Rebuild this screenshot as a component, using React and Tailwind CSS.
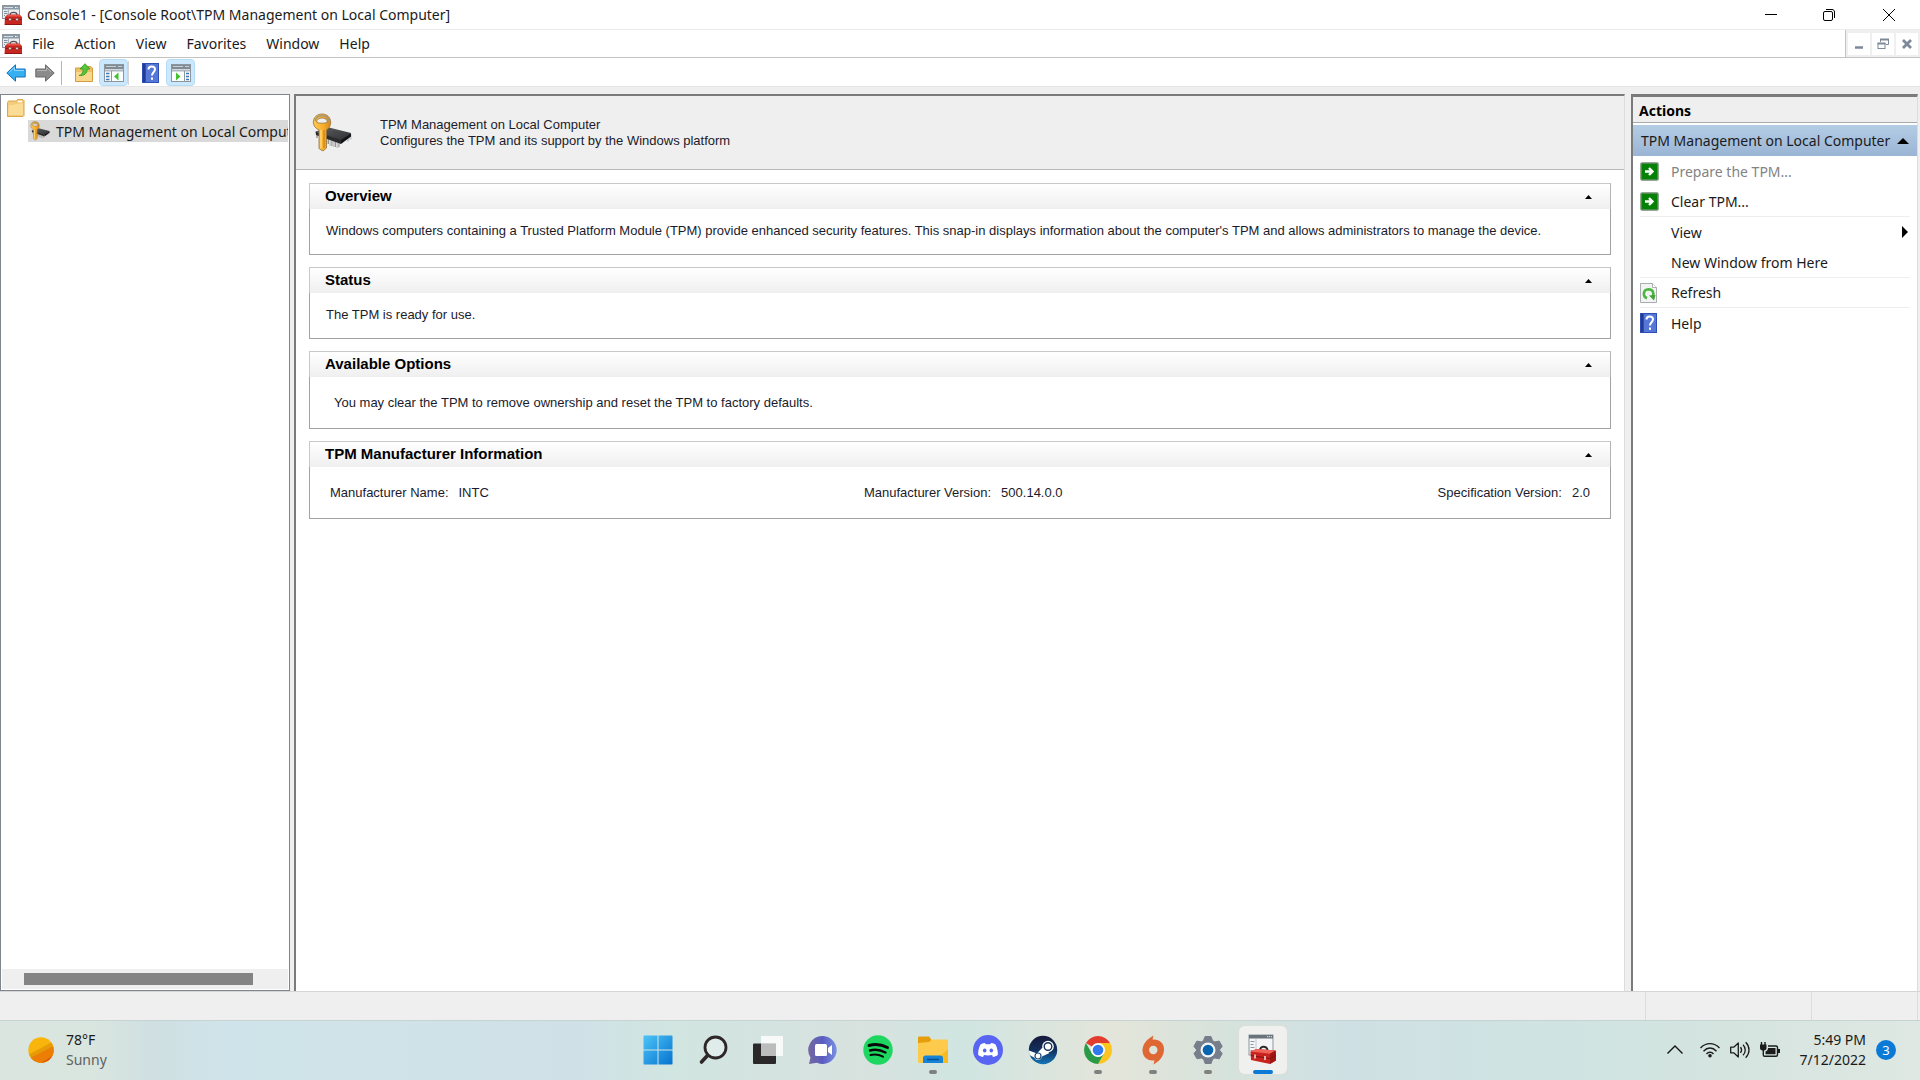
import { useState } from "react";
import clsx from "clsx";

function ConsoleIcon({ className }) {
  return (
    <svg viewBox="0 0 20 20" className={className} aria-hidden="true">
      <rect x="0.5" y="0.5" width="17" height="13" fill="#e9edf0" stroke="#8d969f" />
      <rect x="1" y="1" width="16" height="3.5" fill="#8b99a6" />
      <path d="M2 2.5h9" stroke="#d5dde3" />
      <path d="M13 2.5h3" stroke="#fff" strokeDasharray="1 .6" />
      <path d="M2 6.5h3.500M2 8.5h3.500M2 10.5h1" stroke="#7f8c99" />
      <path d="M6.500 4.500v5" stroke="#aab3bb" />
      <path d="M8 10c0-3.500 7-3.500 7 0" fill="none" stroke="#564d50" strokeWidth="1.300" />
      <path d="M3 12l2.500-2.500h12L20 12v8H2.500z" fill="#c9261f" />
      <path d="M4 11.500l2-1.500h11.500l2 1.500z" fill="#e9544a" />
      <path d="M3 14.500h17" stroke="#8c1713" strokeWidth=".8" />
      <path d="M3 19.500h17" stroke="#8d1713" />
      <circle cx="8" cy="14.500" r="1.400" fill="#e6dcda" stroke="#63211f" strokeWidth=".6" />
      <circle cx="15" cy="14.500" r="1.400" fill="#e6dcda" stroke="#63211f" strokeWidth=".6" />
    </svg>
  );
}

function ToolboxIcon({ className }) {
  return (
    <svg viewBox="0 0 30 32" className={className} aria-hidden="true">
      <rect x="1" y="1" width="24" height="20" fill="#f3f5f7" stroke="#8e979e" />
      <rect x="1" y="1" width="24" height="3.500" fill="#68737c" />
      <path d="M19 2.700h5" stroke="#e3e7ea" strokeDasharray="1.200 .7" />
      <path d="M8 5v16" stroke="#c1c8ce" />
      <path d="M2.500 7.500h4M2.500 10.500h3M2.500 13.500h4M2.500 16.500h2" stroke="#8b9aa8" />
      <path d="M12 17c-1-5 7-6 7.500-1" fill="none" stroke="#2e2a2a" strokeWidth="2" />
      <path d="M2.500 17.500l6-2.500 19 1.500.5 3v7l-6 3.500L3 26z" fill="#c9221f" />
      <path d="M2.500 17.500l6-2.500 19 1.500-5.500 3.300z" fill="#ef6458" />
      <path d="M22 19.800l5.700-3.300v10L22 30z" fill="#9f1512" />
      <path d="M3 21.500l19 3 6-3" fill="none" stroke="#84110f" />
      <path d="M7 20.500v4M17 22v4" stroke="#e8d6d2" strokeWidth="1.600" />
    </svg>
  );
}

function TpmIcon({ className }) {
  return (
    <svg viewBox="0 0 40 40" className={className} aria-hidden="true">
      <defs>
        <linearGradient id="key" x1="0" x2="1">
          <stop offset="0" stopColor="#ffc84e" />
          <stop offset="0.6" stopColor="#f8ad2c" />
          <stop offset="1" stopColor="#d5861a" />
        </linearGradient>
        <linearGradient id="chip" x1="0" x2="1" y2="1">
          <stop offset="0" stopColor="#606265" />
          <stop offset="1" stopColor="#2b2d2f" />
        </linearGradient>
      </defs>
      <path d="M15 25v6M18.500 26v7M22 27v7M25.500 28v7M36 23.500v5M38.500 21.500v5" stroke="#c9c9c9" strokeWidth="2.200" />
      <path d="M16.500 26v5M20 27v6M23.500 28v6M27 29v5" stroke="#7c7c7c" strokeWidth=".8" />
      <path d="M5 21v4" stroke="#999" strokeWidth="1.500" />
      <path d="M3.500 18.500L17 14.500l22 5.500-10 8z" fill="url(#chip)" />
      <path d="M3.500 18.500L29 27v4L4 22z" fill="#2a2b2d" />
      <path d="M29 27l10-7v3.500L29 31z" fill="#141516" />
      <ellipse cx="24" cy="19.500" rx="3" ry="1.200" fill="#45474a" />
      <path
        fillRule="evenodd"
        d="M10 1c5 0 8.700 3.500 8.700 8.500 0 3-1.700 6-4.200 7.500v18L11 38l-4-2.500V17C3.500 15.500 1.300 12.500 1.300 9.500 1.300 4.500 5 1 10 1zm0 4C7 5 5 6.500 4.500 9c2 1.700 9 1.700 11 0C15 6.500 13 5 10 5z"
        fill="url(#key)"
        stroke="#94733a"
        strokeWidth=".8"
      />
      <path d="M3 8C4 4 7 2.700 10 2.700S16 4 17 8" fill="none" stroke="#a99878" strokeWidth="1.600" />
      <path d="M9 17v18.500" stroke="#ffe08c" strokeWidth="1.200" />
      <path d="M12 17v18" stroke="#c4780f" />
    </svg>
  );
}

function FolderIcon() {
  return (
    <svg viewBox="0 0 18 18" className="h-[18px] w-[18px] shrink-0" aria-hidden="true">
      <path d="M.5 3.500l1-1.500h8l1-1.500h5.500l1 1v15l-1 1H.5z" fill="#f4cb78" stroke="#d9a84b" />
      <path d="M11 2.500h4" stroke="#fff" strokeWidth="1.500" />
      <path d="M1.500 6.500L10 5l6-.5V16H1.500z" fill="#fbdc95" />
    </svg>
  );
}

function ArrowIcon({ back }) {
  return (
    <svg viewBox="0 0 20 18" className="h-[18px] w-5" aria-hidden="true">
      {back ? (
        <path d="M.8 9L9.500.8V5h9.700v8H9.500v4.200z" fill="#36b0f1" stroke="#1c72ba" />
      ) : (
        <path d="M19.200 9L10.500.8V5H.8v8h9.700v4.200z" fill="#8b8b8b" stroke="#6a6a6a" />
      )}
      <path d={back ? "M3.500 8L8.500 3.500v3h9.500" : "M2 6.500h9.500v-3L16 8"} fill="none" stroke={back ? "#8bd8fc" : "#b3b3b3"} />
    </svg>
  );
}

function UpFolderIcon() {
  return (
    <svg viewBox="0 0 18 19" className="h-[19px] w-[18px]" aria-hidden="true">
      <path d="M.5 5h6l1-1.500h8l2 1.500v13.500H.5z" fill="#efc06a" stroke="#d39d3f" />
      <path d="M1 9h16v9H1z" fill="#f9d78c" />
      <path d="M4 12.500c2.500-.5 4.500-2.500 4-6.500H5L10 .7 15 6h-3c.5 4.500-3 7-8 6.500z" fill="#55c637" stroke="#2e9721" strokeWidth=".8" />
    </svg>
  );
}

function PaneIcon({ right }) {
  return (
    <svg viewBox="0 0 20 18" className="h-[18px] w-5" aria-hidden="true">
      <rect x=".5" y=".5" width="19" height="17" fill="#fbfcfd" stroke="#8b969e" />
      <rect x="1" y="1" width="18" height="4" fill="#808c95" />
      <path d="M2 2.500h10M14 2.500h4" stroke="#c8d0d6" />
      <path d="M1 6.500h18" stroke="#aeb7bd" strokeWidth="2" />
      {right ? (
        <>
          <path d="M13.500 7v11" stroke="#8b969e" />
          <path d="M15 9.500h3M15 12.500h3M15 15.500h3" stroke="#3d77bd" strokeWidth="1.400" />
          <path d="M5 8.500l4.500 4L5 16.500z" fill="#45c02f" />
        </>
      ) : (
        <>
          <path d="M7.500 7v11" stroke="#8b969e" />
          <path d="M2 9.500h3.500M2 12.500h3.500M2 15.500h3.500" stroke="#3d77bd" strokeWidth="1.400" />
          <path d="M14.500 8.500l-4.500 4 4.500 4z" fill="#45c02f" />
        </>
      )}
    </svg>
  );
}

function HelpIcon() {
  return (
    <svg viewBox="0 0 17 20" className="h-5 w-[17px]" aria-hidden="true">
      <rect width="17" height="20" fill="#2e4db5" />
      <rect x="4" y="1" width="12" height="18" fill="#5577d8" />
      <path d="M2 1v18" stroke="#223b94" strokeWidth="2" />
      <path d="M6.500 6.500C6.500 2.500 13 2.500 13 6.300c0 3-3 2.900-3 6.200" fill="none" stroke="#fff" strokeWidth="2" />
      <rect x="9" y="14.500" width="2" height="2.300" fill="#fff" />
    </svg>
  );
}

function GoIcon() {
  return (
    <svg viewBox="0 0 19 19" className="h-[19px] w-[19px]" aria-hidden="true">
      <rect x="1" y="1" width="17" height="17" rx="1" fill="#058205" stroke="#6f8f70" strokeWidth="1.500" />
      <path d="M5 9.500h6M9 6l3.500 3.500L9 13" fill="none" stroke="#fff" strokeWidth="2.400" />
    </svg>
  );
}

function RefreshIcon() {
  return (
    <svg viewBox="0 0 17 20" className="h-5 w-[17px]" aria-hidden="true">
      <path d="M.5.500h12l4 4v15H.5z" fill="#f2f3f3" stroke="#a9adb0" />
      <path d="M12.500.5v4h4" fill="#fff" stroke="#a9adb0" />
      <path d="M7 15.200C2.300 13.500 3 6.500 8.500 6.300c4.500 0 5.800 4 4.200 7" fill="none" stroke="#4ab63f" strokeWidth="2.600" />
      <path d="M9 12.500l6.500-.5-1.500 5.500z" fill="#3fa336" />
    </svg>
  );
}

function Triangle({ className, d = "M0 5L5 0l5 5z", box = "0 0 10 5" }) {
  return (
    <svg viewBox={box} className={className} aria-hidden="true">
      <path d={d} />
    </svg>
  );
}

function TitleBar() {
  return (
    <header className="flex h-[29px] items-center bg-white">
      <ConsoleIcon className="ml-0.5 h-5 w-5" />
      <h1 className="ml-[5px] flex-1 text-[14px]">Console1 - [Console Root\TPM Management on Local Computer]</h1>
      <div className="flex h-full">
        <button aria-label="Minimize" className="flex w-[58px] items-center justify-center">
          <svg viewBox="0 0 12 12" className="h-3 w-3"><path d="M0 5.500h12" stroke="#000" /></svg>
        </button>
        <button aria-label="Restore" className="flex w-[58px] items-center justify-center">
          <svg viewBox="0 0 12 12" className="h-3 w-3" fill="none" stroke="#000">
            <rect x=".5" y="2.500" width="9" height="9" rx="1.500" />
            <path d="M3 .5h6c1.500 0 2.500 1 2.500 2.500v6" />
          </svg>
        </button>
        <button aria-label="Close" className="flex w-[62px] items-center justify-center">
          <svg viewBox="0 0 12 12" className="h-3 w-3"><path d="M0 0l12 12M12 0L0 12" stroke="#000" /></svg>
        </button>
      </div>
    </header>
  );
}

function MenuBar() {
  return (
    <div className="flex h-[29px] border-y border-t-[#ebebeb] border-b-[#c3c3c3] bg-white">
      <nav className="flex flex-1 items-center gap-5 border-r border-[#c3c3c3] pl-0.5">
        <ConsoleIcon className="-mr-2.5 h-5 w-5" />
        {["File", "Action", "View", "Favorites", "Window", "Help"].map((m) => (
          <button key={m}>{m}</button>
        ))}
      </nav>
      <div className="flex items-center gap-0.5 bg-[#efefef] p-0.5">
        <button aria-label="Minimize child" className="flex h-[22px] w-[22px] items-center justify-center bg-white">
          <svg viewBox="0 0 12 12" className="h-3 w-3"><path d="M2 9.500h8" stroke="#7d8899" strokeWidth="2.500" /></svg>
        </button>
        <button aria-label="Restore child" className="flex h-[22px] w-[22px] items-center justify-center bg-white">
          <svg viewBox="0 0 12 12" className="h-3 w-3" fill="none" stroke="#7d8899">
            <path d="M3.500 4V1.500h8v5H9" />
            <path d="M3 1.500h9" strokeWidth="2" />
            <rect x="1" y="5.500" width="7" height="5" />
            <path d="M.5 5.500h8" strokeWidth="2" />
          </svg>
        </button>
        <button aria-label="Close child" className="flex h-[22px] w-[22px] items-center justify-center bg-white">
          <svg viewBox="0 0 12 12" className="h-3 w-3"><path d="M2 2l8 8M10 2l-8 8" stroke="#7d8899" strokeWidth="2.800" /></svg>
        </button>
      </div>
    </div>
  );
}

function Toolbar() {
  const active = "flex h-[27px] w-[29px] items-center justify-center rounded-sm border border-[#b5dcf5] bg-[#cce8ff]";
  return (
    <div className="flex h-[29px] items-center border-b border-[#e5e5e5] bg-white pt-px pl-1.5">
      <button aria-label="Back"><ArrowIcon back /></button>
      <button aria-label="Forward" className="ml-[9px]"><ArrowIcon /></button>
      <span className="ml-1.5 h-6 w-px bg-[#b5b5b5]" />
      <button aria-label="Up one level" className="ml-[13px]"><UpFolderIcon /></button>
      <button aria-label="Console tree" className={clsx(active, "ml-1.5")}><PaneIcon /></button>
      <span className="h-6 w-px bg-[#d5d5d5]" />
      <button aria-label="Help" className="ml-[13px]"><HelpIcon /></button>
      <button aria-label="Action pane" className={clsx(active, "ml-[7px]")}><PaneIcon right /></button>
    </div>
  );
}

function ConsoleTree() {
  return (
    <aside className="flex w-[290px] shrink-0 flex-col overflow-hidden border border-[#7f848d] bg-white pt-px">
      <div className="flex h-6 items-center pl-1.5">
        <FolderIcon />
        <button className="ml-2">Console Root</button>
      </div>
      <div className="ml-[27px] mr-px flex h-[22px] items-center overflow-hidden bg-[#d9d9d9] pl-0.5">
        <TpmIcon className="h-5 w-5 shrink-0" />
        <button className="ml-1.5 whitespace-nowrap">TPM Management on Local Computer</button>
      </div>
      <div className="mx-px mt-auto mb-px h-[20px] bg-[#efefef] px-[22px] py-1">
        <div className="h-3 w-[229px] bg-[#848484]" />
      </div>
    </aside>
  );
}

function Group({ title, children, tall }) {
  const [open, setOpen] = useState(true);
  return (
    <section>
      <button
        onClick={() => setOpen(!open)}
        className="flex h-[26px] w-full items-center justify-between border border-b-0 border-[#c9c9c9] border-r-[#b4b4b4] bg-linear-to-b from-white to-[#efefef] pr-[18px] pl-[15px] text-left text-[15px] font-bold text-black"
      >
        {title}
        <Triangle className={clsx("h-1 w-[7px]", !open && "rotate-180")} d="M0 4L3.500 0 7 4z" box="0 0 7 4" />
      </button>
      {open && (
        <div
          className={clsx(
            "border border-t-0 border-[#a2a2a2] leading-5",
            tall ? "pt-4 pb-[15px]" : "pt-3 pb-[13px]"
          )}
        >
          {children}
        </div>
      )}
    </section>
  );
}

function Details() {
  return (
    <main className="flex min-w-0 flex-1 flex-col border-t-2 border-l-2 border-r border-t-[#7b7b7b] border-r-[#dcdcdc] border-l-[#7b7b7b] bg-white font-['Liberation_Sans',sans-serif] text-[13px] text-[#1b1b2b]">
      <div className="flex h-[74px] items-center border-b border-[#b8b8b8] bg-[#efefef] pl-4">
        <TpmIcon className="h-10 w-10" />
        <div className="ml-7 leading-4">
          <h2>TPM Management on Local Computer</h2>
          <p>Configures the TPM and its support by the Windows platform</p>
        </div>
      </div>
      <div className="flex flex-col gap-3 px-[13px] pt-[13px]">
        <Group title="Overview">
          <p className="pl-4">
            Windows computers containing a Trusted Platform Module (TPM) provide enhanced security features. This snap-in
            displays information about the computer's TPM and allows administrators to manage the device.
          </p>
        </Group>
        <Group title="Status">
          <p className="pl-4">The TPM is ready for use.</p>
        </Group>
        <Group title="Available Options" tall>
          <p className="pl-6">You may clear the TPM to remove ownership and reset the TPM to factory defaults.</p>
        </Group>
        <Group title="TPM Manufacturer Information" tall>
          <dl className="flex justify-between px-5">
            <div className="flex gap-2.5">
              <dt>Manufacturer Name:</dt>
              <dd>INTC</dd>
            </div>
            <div className="flex gap-2.5">
              <dt>Manufacturer Version:</dt>
              <dd>500.14.0.0</dd>
            </div>
            <div className="flex gap-2.5">
              <dt>Specification Version:</dt>
              <dd>2.0</dd>
            </div>
          </dl>
        </Group>
      </div>
    </main>
  );
}

function Action({ icon, label, disabled, more }) {
  return (
    <button disabled={disabled} className={clsx("flex h-[30px] w-full items-center text-left", more ? "pr-0.5" : "pr-1", disabled && "text-[#838383]")}>
      <span className="flex w-[31px]">{icon}</span>
      <span className="flex-1">{label}</span>
      {more && <Triangle className="h-3 w-[6px]" d="M0 0l6 6-6 6z" box="0 0 6 12" />}
    </button>
  );
}

function ActionsPane() {
  return (
    <aside className="mr-0.5 ml-0.5 w-[287px] shrink-0 border-t-3 border-l-2 border-r border-t-[#7b7b7b] border-r-[#dcdcdc] border-l-[#7b7b7b] bg-white">
      <h2 className="h-[26px] border-b border-[#a9a9a9] bg-[#efefef] pl-1.5 leading-7 font-bold text-black">Actions</h2>
      <button className="mt-0.5 flex h-[31px] w-full items-center justify-between bg-linear-to-b from-[#b4cde6] to-[#9ab4d4] pr-2 pl-2 whitespace-nowrap">
        TPM Management on Local Computer
        <Triangle className="h-1.5 w-3" d="M0 6L6 0l6 6z" box="0 0 12 6" />
      </button>
      <div className="divide-y divide-[#eeeeee] px-[7px]">
        <div>
          <Action icon={<GoIcon />} label="Prepare the TPM..." disabled />
          <Action icon={<GoIcon />} label="Clear TPM..." />
        </div>
        <div>
          <Action label="View" more />
          <Action label="New Window from Here" />
        </div>
        <Action icon={<RefreshIcon />} label="Refresh" />
        <Action icon={<HelpIcon />} label="Help" />
      </div>
    </aside>
  );
}

function StartIcon() {
  return (
    <svg viewBox="0 0 30 30" className="h-[30px] w-[30px]">
      <defs>
        <linearGradient id="start" x1="0" y1="0" x2="1" y2="1">
          <stop offset="0" stopColor="#4cc4f8" />
          <stop offset="1" stopColor="#0673cf" />
        </linearGradient>
      </defs>
      <path d="M1 .5h13.500v14H.5V1zM15.500.5H29l.5.500v13.500h-14zM.5 15.500h14v14H1l-.5-.5zM15.500 15.500h14V29l-.5.500H15.500z" fill="url(#start)" />
    </svg>
  );
}

function SearchIcon() {
  return (
    <svg viewBox="0 0 30 30" className="h-[30px] w-[30px]" fill="none">
      <circle cx="17.500" cy="12.500" r="10.500" fill="#fff" fillOpacity=".3" stroke="#2d2728" strokeWidth="2.800" />
      <path d="M9.500 20.500L3.500 27" stroke="#2d2728" strokeWidth="3.600" strokeLinecap="round" />
    </svg>
  );
}

function TaskViewIcon() {
  return (
    <svg viewBox="0 0 30 30" className="h-[30px] w-[30px]">
      <rect y="8.500" width="23" height="20.500" rx="1" fill="#2a2829" />
      <rect x="8" y="1" width="22" height="20" rx="1" fill="#fff" fillOpacity=".8" />
      <path d="M8 8.500h15V21H8z" fill="#bcbcbc" />
    </svg>
  );
}

function ChatIcon() {
  return (
    <svg viewBox="0 0 30 30" className="h-[30px] w-[30px]">
      <defs>
        <linearGradient id="chat" x1="0" x2="1">
          <stop offset="0" stopColor="#75699f" />
          <stop offset="0.5" stopColor="#5b5cc0" />
          <stop offset="1" stopColor="#7791e3" />
        </linearGradient>
      </defs>
      <path d="M15 1a14 14 0 1 1-6 26.800L1 29l1.500-6.500A14 14 0 0 1 15 1z" fill="url(#chat)" />
      <rect x="7" y="9" width="12" height="12" rx="1.500" fill="#fff" />
      <path d="M20 13l4-3v10l-4-3z" fill="#fff" />
    </svg>
  );
}

function SpotifyIcon() {
  return (
    <svg viewBox="0 0 30 30" className="h-[30px] w-[30px]" fill="none" stroke="#080808" strokeLinecap="round">
      <circle cx="15" cy="15" r="14.700" fill="#1ed760" stroke="none" />
      <path d="M6 10.500c6-1.700 12.500-1 18.500 2" strokeWidth="2.900" />
      <path d="M7 15.500c5-1.400 10.500-.7 15.500 2" strokeWidth="2.400" />
      <path d="M7.500 20c4.500-1 8.500-.5 12.500 1.700" strokeWidth="2" />
    </svg>
  );
}

function ExplorerIcon() {
  return (
    <svg viewBox="0 0 30 28" className="h-7 w-[30px]">
      <path d="M0 2c0-1 .5-1.500 1.500-1.500H11L13 3v4H0z" fill="#e79e0b" />
      <path d="M0 7l11-1 3-2.500h14.500c1 0 1.500.5 1.500 1.500v22H1.500C.5 27 0 26.500 0 25.500z" fill="#fdca4b" />
      <path d="M15 27L30 13v14z" fill="#fbbb20" />
      <path d="M5 27v-5c0-1.500 1-2.500 2.500-2.500h15c1.500 0 2.500 1 2.500 2.500v5z" fill="#1583d6" />
      <path d="M9 23.500h12" stroke="#074f91" strokeWidth="1.500" />
    </svg>
  );
}

function DiscordIcon() {
  return (
    <svg viewBox="0 0 30 30" className="h-[30px] w-[30px]">
      <circle cx="15" cy="15" r="15" fill="#5865f2" />
      <path
        d="M12 8c-2 .3-3.500.8-4.500 1.500C5.500 13 5 17 5.200 20c1.600 1.200 3.200 1.800 4.800 2l1-2c2.600.6 5.400.6 8 0l1 2c1.600-.2 3.200-.8 4.800-2 .2-3-.3-7-2.300-10.500C21.500 8.800 20 8.300 18 8l-.7 1.300c-1.500-.2-3.100-.2-4.600 0z"
        fill="#fff"
      />
      <ellipse cx="11.700" cy="15.500" rx="1.800" ry="2" fill="#5865f2" />
      <ellipse cx="18.300" cy="15.500" rx="1.800" ry="2" fill="#5865f2" />
    </svg>
  );
}

function SteamIcon() {
  return (
    <svg viewBox="0 0 30 30" className="h-[30px] w-[30px]">
      <defs>
        <linearGradient id="steam" x1="0" y1="0" x2="0" y2="1">
          <stop offset="0" stopColor="#16193a" />
          <stop offset="0.5" stopColor="#12305d" />
          <stop offset="1" stopColor="#1276b8" />
        </linearGradient>
      </defs>
      <circle cx="15" cy="15" r="14.200" fill="url(#steam)" />
      <path d="M.9 15.500l8 3 5.600-6 7 5.500-7.500 3.500c-.5 4-6 5-7.500 1.200L1.500 20z" fill="#fff" />
      <circle cx="20" cy="11.500" r="5.800" fill="#fff" />
      <circle cx="20" cy="11.500" r="3.800" fill="#fff" stroke="#17315b" strokeWidth="1.400" />
      <circle cx="10" cy="21" r="3" fill="none" stroke="#1b4a7e" strokeWidth="1.200" />
    </svg>
  );
}

function ChromeIcon() {
  return (
    <svg viewBox="0 0 28 28" className="h-7 w-7">
      <path d="M14 14L1.900 7A14 14 0 0 1 26.100 7z" fill="#e33b2e" />
      <path d="M14 7h12.100A14 14 0 0 1 14 28l6-10.500z" fill="#fcc41f" />
      <path d="M1.900 7l6.100 10.500 6 3.500 6-3.500L14 28A14 14 0 0 1 1.900 7z" fill="#2a9a48" />
      <circle cx="14" cy="14" r="7" fill="#fff" />
      <circle cx="14" cy="14" r="5.300" fill="#3079ee" />
    </svg>
  );
}

function OriginIcon() {
  return (
    <svg viewBox="0 0 24 30" className="h-[30px] w-6">
      <path
        fillRule="evenodd"
        d="M12.500.5L11.500 4.500C18 3.800 23 8 23 14c0 7-4 12-10.500 15.500l1-4.200C7 26.500 1.500 22 1.500 15.500 1.500 9 6 4 12.500.5zM12.300 10.800a4.200 4.200 0 1 0 0 8.400 4.200 4.200 0 0 0 0-8.400z"
        fill="#df6734"
      />
    </svg>
  );
}

function SettingsIcon() {
  return (
    <svg viewBox="0 0 30 30" className="h-[30px] w-[30px]">
      <path
        d="M12 1.500l-1.500 4.200-2.200 1.200-4.400-.8-3 5.200L3.800 15 1 18.600l3 5.200 4.400-.8 2.200 1.200 1.500 4.300h6l1.500-4.300 2.200-1.200 4.400.8 3-5.200-2.800-3.600 2.800-3.700-3-5.200-4.400.8-2.200-1.200L18 1.500z"
        fill="#777e8b"
        stroke="#777e8b"
        strokeLinejoin="round"
      />
      <circle cx="15" cy="15" r="7.500" fill="#f2f5f7" />
      <circle cx="15" cy="15" r="5.300" fill="#0b64ae" />
    </svg>
  );
}

const apps = [
  { name: "Start", icon: <StartIcon /> },
  { name: "Search", icon: <SearchIcon /> },
  { name: "Task View", icon: <TaskViewIcon /> },
  { name: "Chat", icon: <ChatIcon /> },
  { name: "Spotify", icon: <SpotifyIcon /> },
  { name: "File Explorer", icon: <ExplorerIcon />, running: true },
  { name: "Discord", icon: <DiscordIcon /> },
  { name: "Steam", icon: <SteamIcon /> },
  { name: "Chrome", icon: <ChromeIcon />, running: true },
  { name: "Origin", icon: <OriginIcon />, running: true },
  { name: "Settings", icon: <SettingsIcon />, running: true },
  { name: "Console", icon: <ToolboxIcon className="h-8 w-[30px]" />, active: true },
];

function Taskbar() {
  return (
    <footer className="flex h-[60px] items-center justify-between border-t border-[#c5d3d3] bg-[linear-gradient(90deg,#dbe5df_0%,#d9e5df_5%,#cfdfe2_8%,#cfe4ea_12%,#cfe1e7_30%,#d1e5e1_35%,#d8e2df_45%,#d0e5e1_50%,#e4e5da_58%,#d6e2dc_64%,#cfe0e4_70%,#cfe4e2_82%,#d5e4df_90%,#dfe8e3_100%)] pb-0.5">
      <button className="flex flex-1 items-center gap-3 pl-7 text-left leading-5">
        <svg viewBox="0 0 26 26" className="h-[26px] w-[26px]" aria-hidden="true">
          <defs>
            <clipPath id="sun"><circle cx="13" cy="13" r="12.700" /></clipPath>
          </defs>
          <g clipPath="url(#sun)">
            <path d="M0 0h26v26H0z" fill="#f9b50b" />
            <path d="M0 18L26 4v22H0z" fill="#e79b07" />
            <path d="M0 22L26 9v17H0z" fill="#ec7d05" />
            <path d="M13 26L26 18v8z" fill="#d95a0e" />
          </g>
        </svg>
        <span>
          <span className="block text-[#1a1a1a]">78°F</span>
          <span className="block text-[#5d6361]">Sunny</span>
        </span>
      </button>
      <nav className="flex gap-[7px] pr-1">
        {apps.map((app) => (
          <button
            key={app.name}
            aria-label={app.name}
            className={clsx(
              "relative flex h-12 w-12 items-center justify-center rounded-md",
              app.active && "bg-[#f0f1ef] shadow-[0_0_1px_1px_#dcdfdc]"
            )}
          >
            {app.icon}
            {app.running && <span className="absolute bottom-0 h-1 w-2 rounded-full bg-[#7f8080]" />}
            {app.active && <span className="absolute bottom-0 h-1 w-5 rounded-full bg-[#0a7ad6]" />}
          </button>
        ))}
      </nav>
      <div className="flex flex-1 items-center justify-end pr-6">
        <button aria-label="Show hidden icons">
          <svg viewBox="0 0 16 9" className="h-[9px] w-4"><path d="M.5 8.500L8 1l7.500 7.500" fill="none" stroke="#151515" strokeWidth="1.400" /></svg>
        </button>
        <button className="ml-[17px] flex items-center gap-2.5" aria-label="Network, volume and battery">
          <svg viewBox="0 0 20 16" className="h-4 w-5" fill="none" stroke="#1b1b1b" strokeWidth="1.400">
            <path d="M.5 6C6 .2 14 .2 19.500 6M3.500 9.200C7.500 5 12.500 5 16.500 9.200M6.500 12c2-2.300 5-2.300 7 0" />
            <circle cx="10" cy="13.700" r="1.800" fill="#1b1b1b" stroke="none" />
          </svg>
          <svg viewBox="0 0 20 18" className="h-[18px] w-5" fill="none" stroke="#1b1b1b" strokeWidth="1.300">
            <path d="M.7 6.200h3L8.300 2v14l-4.600-4.200h-3z" strokeLinejoin="round" />
            <path d="M10.500 6.200c1.300 1.700 1.300 3.900 0 5.600M13 3.700c3 3 3 7.600 0 10.600M15.700 1.300c4.400 4.400 4.400 11 0 15.400" />
          </svg>
          <svg viewBox="0 0 20 16" className="h-4 w-5">
            <path d="M1.500 0v3M5 0v3" stroke="#1b1b1b" strokeWidth="1.400" />
            <path d="M0 2.500h6.500V6c0 1.500-1 2.500-2.500 2.500h-1.500C1 8.500 0 7.500 0 6z" fill="#1b1b1b" />
            <path d="M3.300 8v5c0 1 .5 1.300 1.300 1.300H16c1 0 1.500-.5 1.500-1.500V5.500c0-1-.5-1.500-1.500-1.500H8" fill="none" stroke="#1b1b1b" strokeWidth="1.400" />
            <path d="M8 6h7.500v6.300H5.500V9.500C7 9 8 8 8 6z" fill="#1b1b1b" />
            <path d="M18 7h2v4h-2z" fill="#1b1b1b" />
          </svg>
        </button>
        <button className="ml-[18px] w-[68px] text-right leading-5 whitespace-nowrap text-[#1a1a1a]">
          <span className="block">5:49 PM</span>
          <span className="block">7/12/2022</span>
        </button>
        <button aria-label="3 notifications" className="ml-2.5 h-5 w-5 rounded-full bg-[#0a7ad6] text-center text-[13px] leading-5 text-white">
          3
        </button>
      </div>
    </footer>
  );
}

export default function App() {
  return (
    <div className="flex min-h-screen flex-col bg-[#efefef] font-['Noto_Sans',sans-serif] text-[14px] text-[#1b1b1b]">
      <TitleBar />
      <MenuBar />
      <Toolbar />
      <div className="flex flex-1 gap-1 pt-[7px]">
        <ConsoleTree />
        <Details />
        <ActionsPane />
      </div>
      <div className="flex h-[29px] justify-end border-t border-[#d5d5d5]">
        <span className="w-[166px] border-l border-[#dcdcdc]" />
        <span className="mr-0.5 w-[107px] border-x border-[#dcdcdc]" />
      </div>
      <Taskbar />
    </div>
  );
}
